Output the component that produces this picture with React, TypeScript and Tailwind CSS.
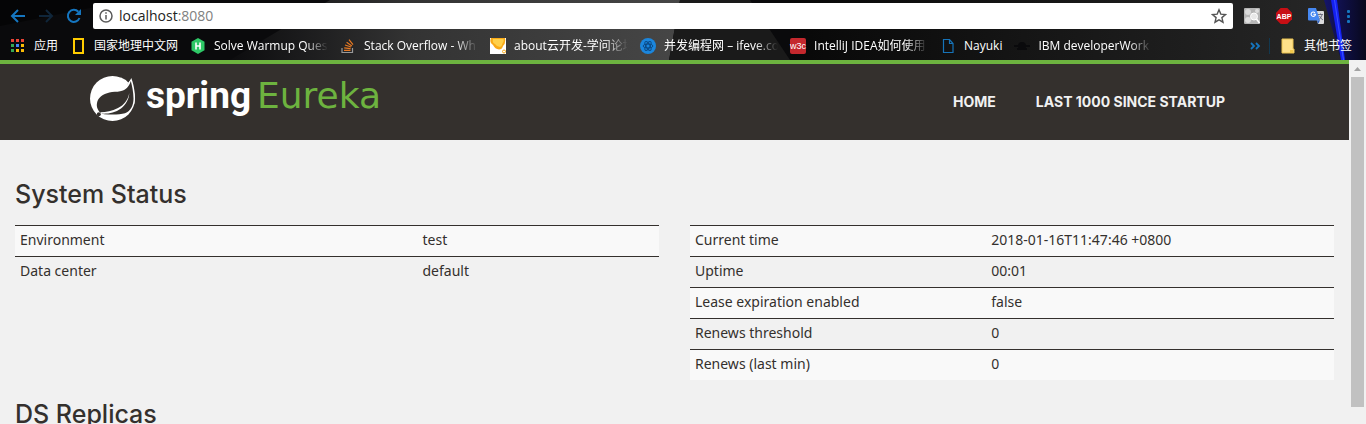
import React from "react";

const ui = "font-['Open_Sans','Noto_Sans_CJK_SC',sans-serif]";

function ThemeArt() {
  return (
    <svg className="absolute inset-0 h-full w-full" viewBox="0 0 1366 60" preserveAspectRatio="none" aria-hidden="true">
      <defs>
        <linearGradient id="beam" x1="0" x2="1" y1="0" y2="0">
          <stop offset="0" stopColor="#0c0c0e" />
          <stop offset="0.4" stopColor="#333333" />
          <stop offset="1" stopColor="#464646" />
        </linearGradient>
        <linearGradient id="right" x1="0" x2="1" y1="0" y2="0">
          <stop offset="0" stopColor="#080808" />
          <stop offset="1" stopColor="#282828" />
        </linearGradient>
        <linearGradient id="glow" x1="0" x2="1" y1="0" y2="0">
          <stop offset="0" stopColor="#15156a" />
          <stop offset="1" stopColor="#08081c" />
        </linearGradient>
      </defs>
      <rect width="1366" height="60" fill="#0a0a0c" />
      <path d="M0 26 L130 0 H0z" fill="#050506" />
      <path d="M230 60 L330 0 H680 L669 60z" fill="url(#beam)" />
      <path d="M669 60 L680 0 H750 L790 60z" fill="#1a1a1a" />
      <rect x="790" width="576" height="60" fill="url(#right)" />
      <path d="M1324 0 H1366 V60 H1341z" fill="url(#glow)" />
      <path d="M1331 0 H1337 L1345 60 H1341z" fill="#1420f0" />
      <path d="M1334 0 H1335 L1344 60 H1343z" fill="#3a50ff" />
    </svg>
  );
}

function Apps() {
  const colors = ["#ea4335", "#ea4335", "#ea4335", "#34a853", "#4285f4", "#fbbc05", "#34a853", "#fbbc05", "#fbbc05"];
  return (
    <svg width="16" height="16" viewBox="0 0 16 16">
      {colors.map((c, i) => (
        <rect key={i} x={1 + (i % 3) * 5} y={1 + Math.floor(i / 3) * 5} width="3" height="3" fill={c} />
      ))}
    </svg>
  );
}

const NatGeo = () => (
  <svg width="16" height="16" viewBox="0 0 16 16"><rect x="4" y="1" width="9" height="14" fill="none" stroke="#fc0" strokeWidth="2" /></svg>
);
const Hacker = () => (
  <svg width="16" height="16" viewBox="0 0 16 16">
    <path d="M8 0l6.5 3.7v8.6L8 16l-6.500-3.700V3.700z" fill="#2ec866" />
    <path d="M6 4.500v7M10 4.500v7M6 8h4" stroke="#fff" strokeWidth="1.600" />
  </svg>
);
const Stack = () => (
  <svg width="16" height="16" viewBox="0 0 16 16" fill="none">
    <path d="M2 10v4.500h10.500V10" stroke="#9a9a9a" strokeWidth="1.200" />
    <path d="M4 12.300h6.500M4.200 9.800l6.400.8M5 7l6.100 2M6.600 4.300l5.300 3.600M9 1.600l4 5" stroke="#e87922" strokeWidth="1.200" />
  </svg>
);
const AboutCloud = () => (
  <svg width="16" height="16" viewBox="0 0 16 16">
    <rect width="16" height="16" fill="#fff" />
    <path d="M1 0Q-1 5 3 7q2 4 6 4.500 3 0 4-3.500 3-3 2-8z" fill="#f9a916" />
    <path d="M3 1q-1 4 2 5 2 3 5 3 2-1 2.500-3.500 2-2 1-4.500z" fill="#ffd04a" />
    <circle cx="14" cy="13.500" r="1.500" fill="none" stroke="#f9a916" />
  </svg>
);
const Ifeve = () => (
  <svg width="16" height="16" viewBox="0 0 16 16" fill="none" stroke="#0b4a86">
    <circle cx="8" cy="8" r="8" fill="#1b86dd" stroke="none" />
    <ellipse cx="8" cy="8" rx="5" ry="2" />
    <ellipse cx="8" cy="8" rx="5" ry="2" transform="rotate(60 8 8)" />
    <ellipse cx="8" cy="8" rx="5" ry="2" transform="rotate(120 8 8)" />
  </svg>
);
const W3c = () => (
  <span className="flex size-4 items-center justify-center rounded-xs bg-[#c4282d] font-['Liberation_Sans',sans-serif] text-[9px] leading-none text-white">w3c</span>
);
const FileIcon = () => (
  <svg width="16" height="16" viewBox="0 0 16 16" fill="none" stroke="#1673b8" strokeWidth="1.200">
    <path d="M3.500 1.500h6l3.500 4v9H3.500zM9.500 1.500v4H13" />
  </svg>
);
const Ibm = () => (
  <svg width="16" height="16" viewBox="0 0 16 16" fill="#0a0a0c">
    <circle cx="8" cy="8" r="4" /><rect x="0" y="7" width="16" height="2" /><rect x="3" y="10" width="10" height="2" />
  </svg>
);
const Folder = () => (
  <svg width="16" height="16" viewBox="0 0 16 16">
    <path d="M2 1h11v10h1v4H2z" fill="#fde08a" stroke="#e9c251" /><path d="M10 12h3v3h-3z" fill="#f2c94c" />
  </svg>
);

const bookmarks: { label: string; icon: React.ReactNode; faded?: boolean }[] = [
  { label: "应用", icon: <Apps /> },
  { label: "国家地理中文网", icon: <NatGeo /> },
  { label: "Solve Warmup Ques", icon: <Hacker />, faded: true },
  { label: "Stack Overflow - Wh", icon: <Stack />, faded: true },
  { label: "about云开发-学问论坛", icon: <AboutCloud />, faded: true },
  { label: "并发编程网 – ifeve.co", icon: <Ifeve />, faded: true },
  { label: "IntelliJ IDEA如何使用", icon: <W3c />, faded: true },
  { label: "Nayuki", icon: <FileIcon /> },
  { label: "IBM developerWork", icon: <Ibm />, faded: true },
];

function Browser() {
  return (
    <div className={`relative shrink-0 bg-black ${ui}`}>
      <ThemeArt />
      <div className="relative flex h-8 items-center px-2.5">
        <div className="flex gap-3 text-[#1576c0]">
          <button aria-label="Back" className="size-4">
            <svg viewBox="0 0 16 16" fill="none" stroke="currentColor" strokeWidth="2"><path d="M15 8H2.500M8 2L2 8l6 6" /></svg>
          </button>
          <button aria-label="Forward" className="size-4 text-[#10263a]">
            <svg viewBox="0 0 16 16" fill="none" stroke="currentColor" strokeWidth="2"><path d="M1 8h12.500M8 2l6 6-6 6" /></svg>
          </button>
          <button aria-label="Reload" className="size-4">
            <svg viewBox="0 0 16 16" fill="none" stroke="currentColor" strokeWidth="2"><path d="M13.500 10A6 6 0 1 1 12.300 3.800" /><path d="M15 1v6H9z" fill="currentColor" stroke="none" /></svg>
          </button>
        </div>
        <div className="mx-[11px] flex h-[26px] flex-1 items-center rounded-xs bg-white px-1.5">
          <svg className="size-3.5" viewBox="0 0 14 14" fill="none" stroke="#5a5a5a" strokeWidth="1.500"><circle cx="7" cy="7" r="6" /><path d="M7 6v4.500M7 3.300v1.500" /></svg>
          <div className="ml-1.5 flex-1 text-sm leading-5 text-[#222]">localhost<span className="text-[#808080]">:8080</span></div>
          <button aria-label="Bookmark this page" className="size-4">
            <svg viewBox="0 0 16 16" fill="none" stroke="#555" strokeWidth="1.400"><path d="M8 1.800l1.800 4.300 4.700.4-3.600 3.100 1.100 4.600L8 11.800l-4 2.400 1.100-4.600L1.500 6.500l4.700-.4z" /></svg>
          </button>
        </div>
        <div className="flex items-center gap-4">
          <svg width="16" height="16" viewBox="0 0 16 16">
            <rect width="16" height="16" rx="1" fill="#b5b5b5" /><circle cx="4" cy="4" r="3" fill="#d9d9d9" /><circle cx="4" cy="12" r="3" fill="#dedede" /><circle cx="13" cy="3" r="2" fill="#ddd" />
            <circle cx="10" cy="8.500" r="3.500" fill="#e8e8e8" stroke="#fff" /><path d="M12.500 11l3 4" stroke="#fff" strokeWidth="1.500" />
          </svg>
          <span className="relative flex size-4 items-center justify-center">
            <svg className="absolute inset-0" viewBox="0 0 16 16"><path d="M4.700 0h6.600L16 4.700v6.600L11.300 16H4.700L0 11.300V4.700z" fill="#c80f14" /></svg>
            <span className="relative font-['Liberation_Sans',sans-serif] text-[7px] leading-none font-bold text-white">ABP</span>
          </span>
          <span className="relative size-4">
            <svg viewBox="0 0 16 16">
              <path d="M6 3h9q1 0 1 1v11q0 1-1 1H10z" fill="#dcdcdc" /><path d="M0 1q0-1 1-1h7l4 12.500H1q-1 0-1-1z" fill="#4688f1" />
              <path d="M7 4.800A2.200 2.200 0 1 0 7.500 6.300H5.300" fill="none" stroke="#fff" strokeWidth="1.100" />
              <path d="M10 6.500h5M12.500 5.500v1M14 7q-1 3-3 4.500M11.500 8q1 2.500 3.500 4" fill="none" stroke="#667" strokeWidth=".9" /><path d="M10 16l2-3.500H9z" fill="#2a5fc0" />
            </svg>
          </span>
          <button aria-label="Menu" className="size-4">
            <svg viewBox="0 0 16 16" fill="#1576c0"><rect x="7" y="2" width="3" height="3" rx="1" /><rect x="7" y="7" width="3" height="3" rx="1" /><rect x="7" y="12" width="3" height="3" rx="1" /></svg>
          </button>
        </div>
      </div>
      <nav aria-label="Bookmarks" className="relative flex h-7 items-center pr-3.5 pl-2.5 text-xs whitespace-nowrap text-white">
        <div className="flex flex-1 items-center gap-3">
          {bookmarks.map((b) => (
            <a key={b.label} href="#" className="flex items-center gap-2">
              <span className="flex size-4 shrink-0">{b.icon}</span>
              <span className={b.faded ? "w-[114px] overflow-hidden [mask-image:linear-gradient(to_right,black_80%,transparent)]" : ""}>{b.label}</span>
            </a>
          ))}
        </div>
        <button aria-label="More bookmarks" className="size-4">
          <svg viewBox="0 0 16 16" fill="none" stroke="#1576c0" strokeWidth="1.800"><path d="M4 5l3 3-3 3M9 5l3 3-3 3" /></svg>
        </button>
        <span className="ml-1.5 h-4 w-px bg-[#12384f]" />
        <a href="#" className="ml-2.5 flex items-center gap-2"><Folder />其他书签</a>
      </nav>
    </div>
  );
}

function SpringLeaf() {
  return (
    <svg width="46" height="46" viewBox="0 0 46 46">
      <circle cx="22.500" cy="22.500" r="22.500" fill="#fff" />
      <path d="M36 8C39 6 40.500 4 41.300 2 43.500 8 46.500 20 44 29L38 30z" fill="#fff" />
      <path d="M35 -1H40.500C40 4 38.500 6.500 37 8.500L31 2z" fill="#34302d" />
      <path d="M31 1.600Q35.500 3.300 38.500 6.800L36 10 29 4z" fill="#fff" />
      <path d="M40.800 5C39.500 9 37.500 12.500 33 14.500 29 16 26 15.700 22 16 15 17 9.500 20 7.500 25 6 29.500 7 33 10 36.500L14 38.300C22 38.800 30 38.800 35 37.300 41 35 43.500 29 43.500 22.500 43.500 16 42 9.500 40.800 5z" fill="#34302d" />
      <path d="M39.300 17C38 24 34 29 28 32 22 35.300 16 36 10.500 36.300L11 37.600C18 38 25 37 31 32.500 36 28.500 39 23 39.300 17z" fill="#fff" />
      <circle cx="8.800" cy="38.300" r="2" fill="#34302d" />
    </svg>
  );
}

function Header() {
  return (
    <header className="flex h-20 items-start justify-between border-t-4 border-[#6db33f] bg-[#34302d] pt-3 pr-31 pl-[90px]">
      <a href="#" className="flex items-start gap-2.5">
        <SpringLeaf />
        <span className="flex items-baseline gap-1.5 leading-10">
          <span className="font-[Roboto,sans-serif] text-[37px] font-bold text-white">spring</span>
          <span className="font-['DejaVu_Sans',sans-serif] text-[36px] text-[#6db33f]">Eureka</span>
        </span>
      </a>
      <nav className="flex gap-10 pt-4 font-[Inter,sans-serif] text-sm font-bold text-[#f1f1f1]">
        <a href="#">HOME</a>
        <a href="#">LAST 1000 SINCE STARTUP</a>
      </nav>
    </header>
  );
}

function StatusTable({ rows, label, first }: { rows: string[][]; label: string; first: string }) {
  return (
    <table aria-label={label} className="w-full table-fixed self-start text-sm leading-5">
      <tbody>
        {rows.map(([k, v]) => (
          <tr key={k} className="border-t border-[#34302d] odd:bg-[#f9f9f9]">
            <th scope="row" className={`${first} px-[5px] pt-1 pb-1.5 text-left font-normal`}>{k}</th>
            <td className="px-[5px] pt-1 pb-1.5">{v}</td>
          </tr>
        ))}
      </tbody>
    </table>
  );
}

export default function App() {
  return (
    <div className="flex h-screen flex-col overflow-hidden bg-[#f1f1f1] text-[#34302d]">
      <Browser />
      <div className="flex min-h-0 flex-1">
        <div className="min-w-0 flex-1 overflow-hidden">
          <Header />
          <main className="px-[15px] pt-10 font-['Noto_Sans',sans-serif]">
            <h1 className="mb-4 font-[Inter,sans-serif] text-[25px] leading-[29px] font-medium">System Status</h1>
            <div className="grid grid-cols-2 gap-[31px]">
              <StatusTable label="Environment" first="w-5/8" rows={[["Environment", "test"], ["Data center", "default"]]} />
              <StatusTable
                label="Instance status"
                first="w-[46%]"
                rows={[
                  ["Current time", "2018-01-16T11:47:46 +0800"],
                  ["Uptime", "00:01"],
                  ["Lease expiration enabled", "false"],
                  ["Renews threshold", "0"],
                  ["Renews (last min)", "0"],
                ]}
              />
            </div>
            <h1 className="mt-5 font-[Inter,sans-serif] text-[25px] leading-[29px] font-medium">DS Replicas</h1>
          </main>
        </div>
        <div className="flex w-[17px] shrink-0 flex-col items-center gap-px bg-[#f1f1f1] pb-[17px]" aria-hidden="true">
          <svg width="17" height="16" viewBox="0 0 17 16"><path d="M5 11l3.500-4 3.500 4z" fill="#a3a3a3" /></svg>
          <div className="w-[13px] flex-1 bg-[#c1c1c1]" />
        </div>
      </div>
    </div>
  );
}
